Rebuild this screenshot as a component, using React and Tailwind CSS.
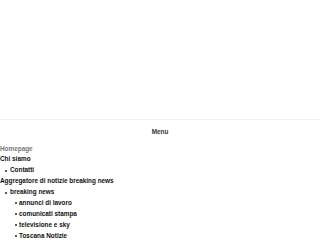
function Item({ indent, children }) {
  return (
    <div className={indent === 1 ? "flex items-center pl-[5px]" : "flex items-center pl-[15px]"}>
      <span className={indent === 1 ? "w-[2px] h-[2px] rounded-full bg-[#222] mr-[3px]" : "w-[2px] h-[2px] rounded-full bg-[#222] mr-[2px]"}></span>
      <span>{children}</span>
    </div>
  );
}

export default function App() {
  const f = { fontFamily: '"Liberation Sans", Arial, sans-serif' };
  return (
    <div className="w-[320px] h-[240px] overflow-hidden bg-white" style={f}>
      <div className="h-[120px] border-b border-[#f0f0f0]"></div>
      <div className="h-[22px] flex items-center justify-center text-[6.4px] font-bold text-[#333] pt-[1px]">Menu</div>
      <div className="text-[6.4px] font-bold leading-[10.9px] text-[#111]">
        <div className="pt-[1.5px] text-[#777]">Homepage</div>
        <div>Chi siamo</div>
        <Item indent={1}>Contatti</Item>
        <div>Aggregatore di notizie breaking news</div>
        <Item indent={1}>breaking news</Item>
        <Item indent={2}>annunci di lavoro</Item>
        <Item indent={2}>comunicati stampa</Item>
        <Item indent={2}>televisione e sky</Item>
        <Item indent={2}>Toscana Notizie</Item>
      </div>
    </div>
  );
}
